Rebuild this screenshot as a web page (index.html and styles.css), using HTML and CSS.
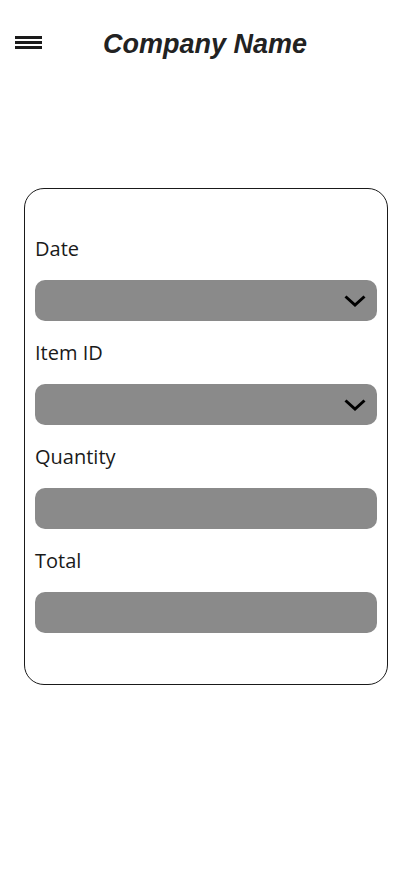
FILE: index.html
```html
<!DOCTYPE html>
<html lang="en">
<head>
<meta charset="utf-8">
<title>Company Name</title>
<link rel="stylesheet" href="styles.css">
</head>
<body>
<header class="topbar">
  <button class="menu" aria-label="Menu">
    <span class="bar"></span><span class="bar"></span><span class="bar"></span>
  </button>
  <h1 class="brand">Company Name</h1>
</header>
<main class="main">
  <form class="card">
    <label class="field">
      <span class="label">Date</span>
      <span class="control select">
        <svg class="chev" width="22" height="12" viewBox="0 0 22 12"><path d="M1.5 1.5 L11 10 L20.5 1.5" fill="none" stroke="#000" stroke-width="3"/></svg>
      </span>
    </label>
    <label class="field">
      <span class="label">Item ID</span>
      <span class="control select">
        <svg class="chev" width="22" height="12" viewBox="0 0 22 12"><path d="M1.5 1.5 L11 10 L20.5 1.5" fill="none" stroke="#000" stroke-width="3"/></svg>
      </span>
    </label>
    <label class="field">
      <span class="label">Quantity</span>
      <span class="control"></span>
    </label>
    <label class="field">
      <span class="label">Total</span>
      <span class="control"></span>
    </label>
  </form>
</main>
</body>
</html>
```
FILE: styles.css
```css
* { box-sizing: border-box; }
html, body { margin: 0; padding: 0; background: #fff; }
body { font-family: "Open Sans", "Noto Sans", sans-serif; color: #1a1a1a; }

.topbar {
  height: 90px;
  display: flex;
  align-items: flex-start;
  padding: 36px 0 0 15px;
}
.menu {
  width: 27px;
  padding: 0;
  border: 0;
  background: none;
  display: flex;
  flex-direction: column;
  gap: 2px;
}
.bar { display: block; height: 3px; background: #1a1a1a; }

.brand {
  margin: -9px 0 0 61px;
  font-family: "Liberation Sans", Arial, sans-serif;
  font-style: italic;
  font-weight: bold;
  font-size: 27px;
  line-height: 34px;
  color: #222;
}

.main { padding: 98px 24px 0 24px; }

.card {
  border: 1px solid #1a1a1a;
  border-radius: 20px;
  padding: 46px 10px 33px 10px;
  display: flex;
  flex-direction: column;
  height: 497px;
}
.field { display: flex; flex-direction: column; margin-bottom: 18px; }
.label {
  font-size: 20px;
  line-height: 27px;
  margin-bottom: 18px;
  color: #1a1a1a;
}
.control {
  height: 41px;
  border-radius: 10px;
  background: #8a8a8a;
  display: flex;
  align-items: center;
  justify-content: flex-end;
  padding-right: 11px;
}
.chev { display: block; margin-top: 1px; }
```
